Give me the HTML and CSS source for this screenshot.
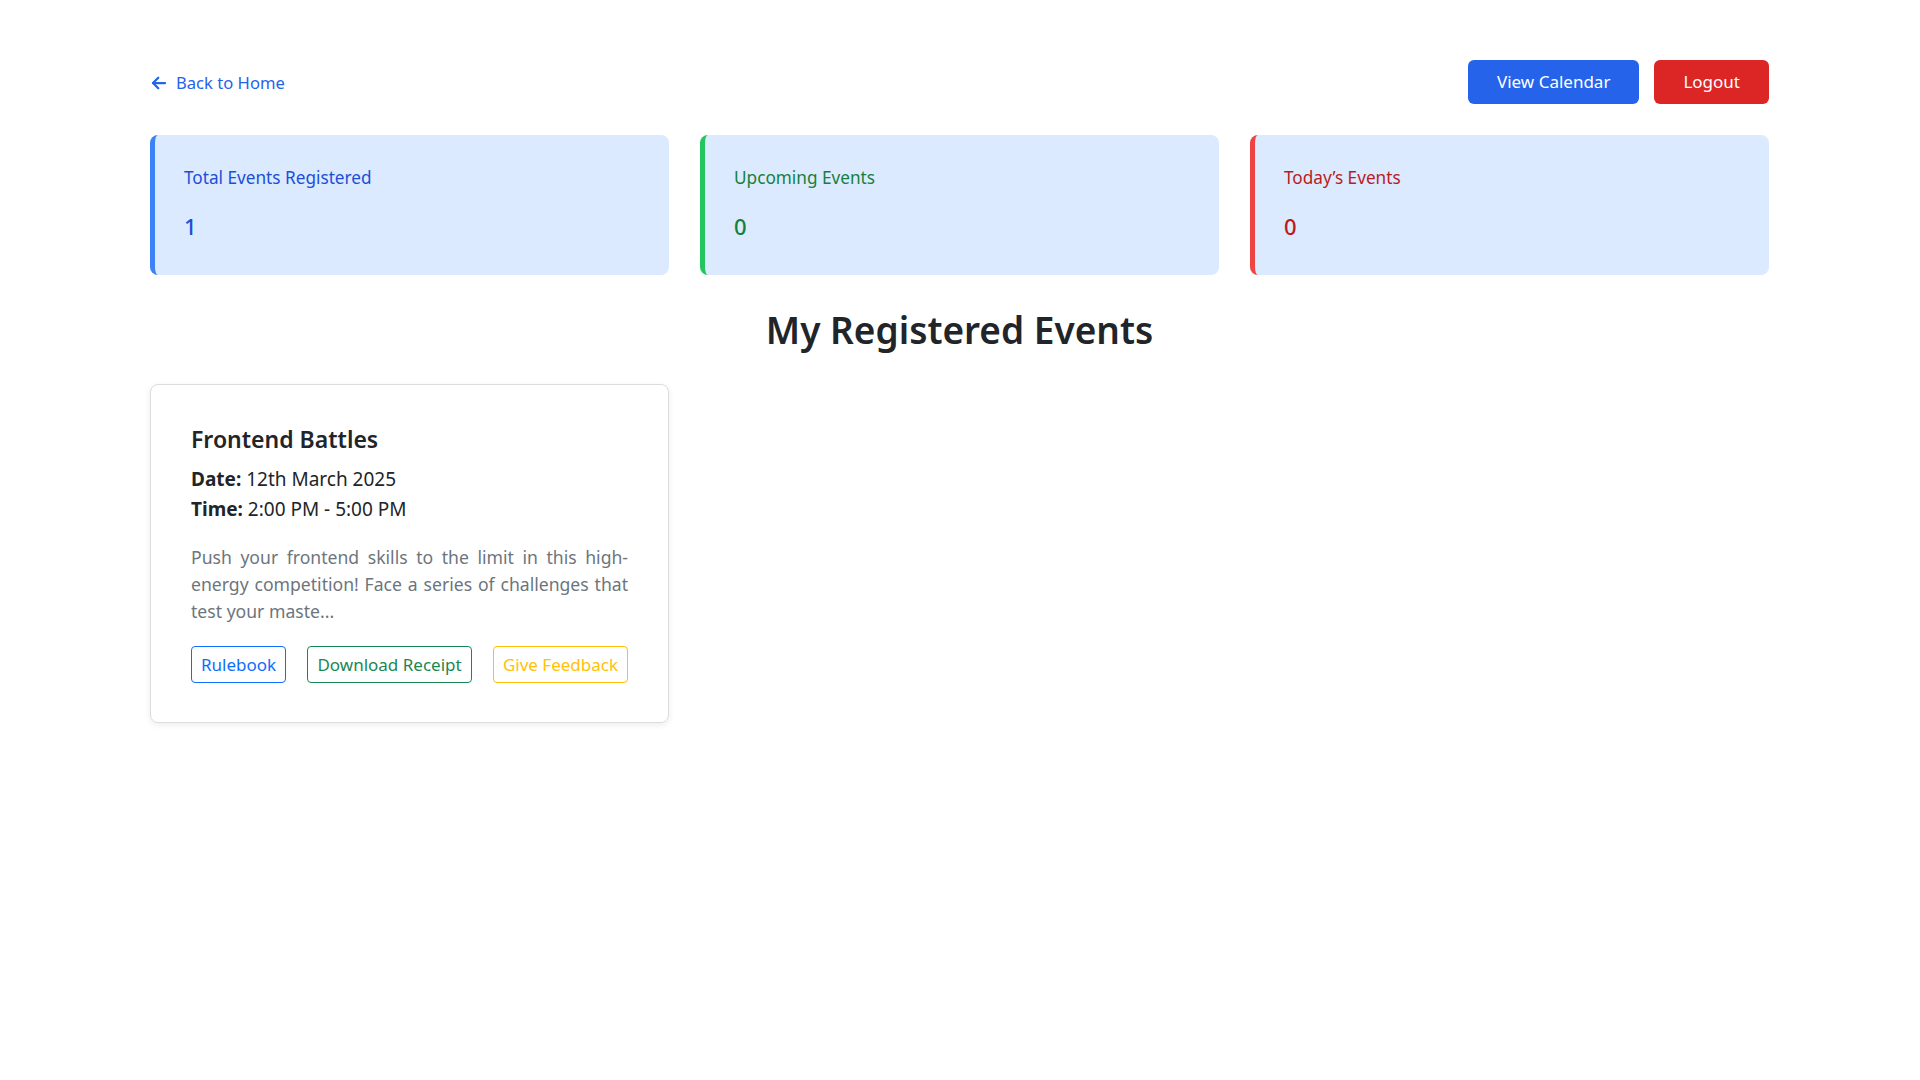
FILE: index.html
```html
<!DOCTYPE html>
<html lang="en">
<head>
<meta charset="utf-8">
<title>My Registered Events</title>
<link rel="stylesheet" href="styles.css">
</head>
<body>
<div class="page">
  <header class="topbar">
    <a class="back" href="#">
      <svg class="back-icon" viewBox="0 0 24 24" width="18" height="18" fill="none" stroke="currentColor" stroke-width="3" stroke-linecap="round" stroke-linejoin="round"><path d="M20 12H4"/><path d="M11 5l-7 7 7 7"/></svg>
      <span>Back to Home</span>
    </a>
    <div class="actions">
      <button class="btn btn-primary">View Calendar</button>
      <button class="btn btn-danger">Logout</button>
    </div>
  </header>

  <section class="stats">
    <div class="stat stat-blue">
      <div class="stat-label">Total Events Registered</div>
      <div class="stat-value">1</div>
    </div>
    <div class="stat stat-green">
      <div class="stat-label">Upcoming Events</div>
      <div class="stat-value">0</div>
    </div>
    <div class="stat stat-red">
      <div class="stat-label">Today’s Events</div>
      <div class="stat-value">0</div>
    </div>
  </section>

  <h2 class="section-title">My Registered Events</h2>

  <section class="events">
    <article class="event-card">
      <h3 class="event-title">Frontend Battles</h3>
      <p class="event-meta"><strong>Date:</strong> 12th March 2025</p>
      <p class="event-meta"><strong>Time:</strong> 2:00 PM - 5:00 PM</p>
      <p class="event-desc">Push your frontend skills to the limit in this high-energy competition! Face a series of challenges that test your maste...</p>
      <div class="event-actions">
        <button class="obtn obtn-blue">Rulebook</button>
        <button class="obtn obtn-green">Download Receipt</button>
        <button class="obtn obtn-yellow">Give Feedback</button>
      </div>
    </article>
  </section>
</div>
</body>
</html>
```

FILE: styles.css
```css
* { box-sizing: border-box; }
html, body { margin: 0; padding: 0; background: #ffffff; }
body {
  font-family: "Segoe UI", "Noto Sans", "Open Sans", sans-serif;
  color: #212529;
  font-size: 17.6px;
  line-height: 1.5;
}
.page {
  padding: 60px 151px 60px 150px;
}
.topbar {
  display: flex;
  justify-content: space-between;
  align-items: center;
  height: 44px;
}
.back {
  display: flex;
  align-items: center;
  gap: 8px;
  color: #2563eb;
  text-decoration: none;
  font-size: 16.6px;
  margin-top: 2px;
}
.back-icon { display: block; }
.actions { display: flex; gap: 15px; }
.btn {
  font-family: inherit;
  font-size: 17px;
  line-height: 26px;
  height: 44px;
  border: none;
  border-radius: 6px;
  color: #ffffff;
  cursor: pointer;
}
.btn-primary { background: #2563eb; padding: 0 29px; }
.btn-danger { background: #dc2626; padding: 0 29px; }

.stats {
  display: grid;
  grid-template-columns: repeat(3, 1fr);
  gap: 31px;
  margin-top: 31px;
}
.stat {
  background: #dbeafe;
  border-radius: 8px;
  border-left: 5px solid;
  padding: 30px 28px 28px 29px;
  height: 140px;
}
.stat-label { font-size: 17.2px; line-height: 26px; }
.stat-value { font-size: 22px; font-weight: 500; line-height: 33px; margin-top: 19px; }
.stat-blue { border-left-color: #3b82f6; }
.stat-blue .stat-label { color: #1d4ed8; }
.stat-blue .stat-value { color: #1d4ed8; }
.stat-green { border-left-color: #22c55e; }
.stat-green .stat-label { color: #15803d; }
.stat-green .stat-value { color: #15803d; }
.stat-red { border-left-color: #ef4444; }
.stat-red .stat-label { color: #b91c1c; }
.stat-red .stat-value { color: #b91c1c; }

.section-title {
  text-align: center;
  font-size: 37px;
  font-weight: 600;
  line-height: 48px;
  margin: 31px 0 30px;
  color: #212529;
}

.events {
  display: grid;
  grid-template-columns: repeat(3, 1fr);
  gap: 31px;
}
.event-card {
  border: 1px solid #dcdcdc;
  border-radius: 8px;
  box-shadow: 0 2px 6px rgba(0,0,0,0.08);
  padding: 40px 40px 39px;
}
.event-title {
  margin: 0 0 11px;
  font-size: 23px;
  font-weight: 600;
  line-height: 29px;
}
.event-meta {
  margin: 0;
  font-size: 19px;
  line-height: 29.5px;
}
.event-meta strong { font-weight: 700; }
.event-desc {
  margin: 20px 0 21px;
  color: #6c757d;
  font-size: 17.6px;
  line-height: 27px;
  text-align: justify;
}
.event-actions {
  display: flex;
  justify-content: space-between;
}
.obtn {
  font-family: inherit;
  font-size: 17px;
  line-height: 27px;
  padding: 4px 9px;
  background: transparent;
  border: 1px solid;
  border-radius: 4px;
  cursor: pointer;
}
.obtn-blue { color: #0d6efd; border-color: #0d6efd; }
.obtn-green { color: #198754; border-color: #198754; }
.obtn-yellow { color: #ffc107; border-color: #ffc107; }
```
